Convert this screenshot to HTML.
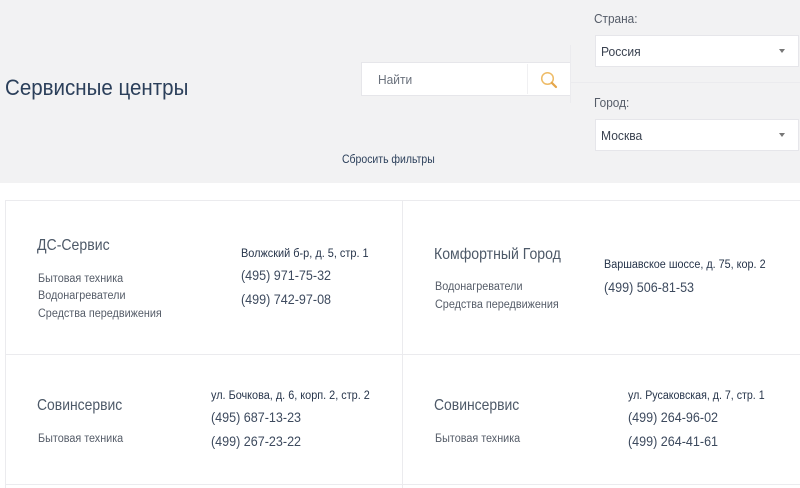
<!DOCTYPE html>
<html lang="ru"><head><meta charset="utf-8"><title>Сервисные центры</title>
<style>
html,body{margin:0;padding:0}
body{width:800px;height:488px;overflow:hidden;background:#fff;position:relative;font-family:"Liberation Sans",sans-serif;color:#2b3a4f}
div{position:absolute;white-space:nowrap;transform-origin:0 50%}
.top{left:0;top:0;width:800px;height:183px;background:#f2f2f3}
.box{background:#fff;border:1px solid #e6e6ea;box-sizing:border-box}
.lab{font-size:13px;color:#555c68;transform:scaleX(.91)}
.val{font-size:13px;color:#3a4250;transform:scaleX(.93)}
.arr{width:0;height:0;border-left:3px solid transparent;border-right:3px solid transparent;border-top:4px solid #777}
.ln{background:#ebebee}
.n{font-size:16px;color:#4d5968;transform:scaleX(.88)}
.c{font-size:11.5px;color:#555c68;transform:scaleX(.94)}
.a{font-size:11.5px;color:#26344a;transform:scaleX(.945)}
.p{font-size:13.5px;color:#3d4a5e;transform:scaleX(.93)}
</style></head><body>
<div class="top"></div>
<div style="left:5px;top:75px;font-size:22px;color:#2b3f5a;transform:scaleX(.933)">Сервисные центры</div>
<div class="box" style="left:361px;top:62px;width:210px;height:34px"></div>
<div style="left:527px;top:64px;width:1px;height:30px;background:#f0f0f2"></div>
<div style="left:378px;top:72px;font-size:13px;color:#6a717c;transform:scaleX(.92)">Найти</div>
<svg style="position:absolute;left:539px;top:70px" width="20" height="20" viewBox="0 0 20 20"><circle cx="8.5" cy="8.5" r="5.8" fill="none" stroke="#eebb66" stroke-width="1.5"/><path d="M12.8 12.8L17 17" stroke="#e5a64a" stroke-width="2.2" stroke-linecap="round"/></svg>
<div class="ln" style="left:570px;top:45px;width:1px;height:58px"></div>
<div class="ln" style="left:570px;top:82px;width:230px;height:1px"></div>
<div class="lab" style="left:594px;top:11px">Страна:</div>
<div class="box" style="left:595px;top:35px;width:204px;height:32px"></div>
<div class="val" style="left:601px;top:44px">Россия</div>
<div class="arr" style="left:779px;top:49px"></div>
<div class="lab" style="left:594px;top:95px">Город:</div>
<div class="box" style="left:595px;top:119px;width:204px;height:32px"></div>
<div class="val" style="left:601px;top:128px">Москва</div>
<div class="arr" style="left:779px;top:133px"></div>
<div style="left:342px;top:154px;font-size:11.5px;color:#2b3f5a;transform:scaleX(.91)">Сбросить фильтры</div>

<div class="ln" style="left:5px;top:200px;width:795px;height:1px"></div>
<div class="ln" style="left:5px;top:200px;width:1px;height:288px"></div>
<div class="ln" style="left:402px;top:200px;width:1px;height:288px"></div>
<div class="ln" style="left:5px;top:354px;width:795px;height:1px"></div>
<div class="ln" style="left:5px;top:484px;width:795px;height:1px"></div>

<div class="n" style="left:37px;top:237px">ДС-Сервис</div>
<div class="c" style="left:38px;top:273px">Бытовая техника</div>
<div class="c" style="left:38px;top:290px">Водонагреватели</div>
<div class="c" style="left:38px;top:308px">Средства передвижения</div>
<div class="a" style="left:241px;top:248px;transform:scaleX(.95)">Волжский б-р, д. 5, стр. 1</div>
<div class="p" style="left:241px;top:268px">(495) 971-75-32</div>
<div class="p" style="left:241px;top:292px">(499) 742-97-08</div>

<div class="n" style="left:434px;top:246px">Комфортный Город</div>
<div class="c" style="left:435px;top:281px">Водонагреватели</div>
<div class="c" style="left:435px;top:299px">Средства передвижения</div>
<div class="a" style="left:604px;top:259px;transform:scaleX(.94)">Варшавское шоссе, д. 75, кор. 2</div>
<div class="p" style="left:604px;top:280px">(499) 506-81-53</div>

<div class="n" style="left:37px;top:397px;transform:scaleX(.87)">Совинсервис</div>
<div class="c" style="left:38px;top:433px">Бытовая техника</div>
<div class="a" style="left:211px;top:390px">ул. Бочкова, д. 6, корп. 2, стр. 2</div>
<div class="p" style="left:211px;top:410px">(495) 687-13-23</div>
<div class="p" style="left:211px;top:434px">(499) 267-23-22</div>

<div class="n" style="left:434px;top:397px;transform:scaleX(.87)">Совинсервис</div>
<div class="c" style="left:435px;top:433px">Бытовая техника</div>
<div class="a" style="left:628px;top:390px;transform:scaleX(.925)">ул. Русаковская, д. 7, стр. 1</div>
<div class="p" style="left:628px;top:410px">(499) 264-96-02</div>
<div class="p" style="left:628px;top:434px">(499) 264-41-61</div>
</body></html>
